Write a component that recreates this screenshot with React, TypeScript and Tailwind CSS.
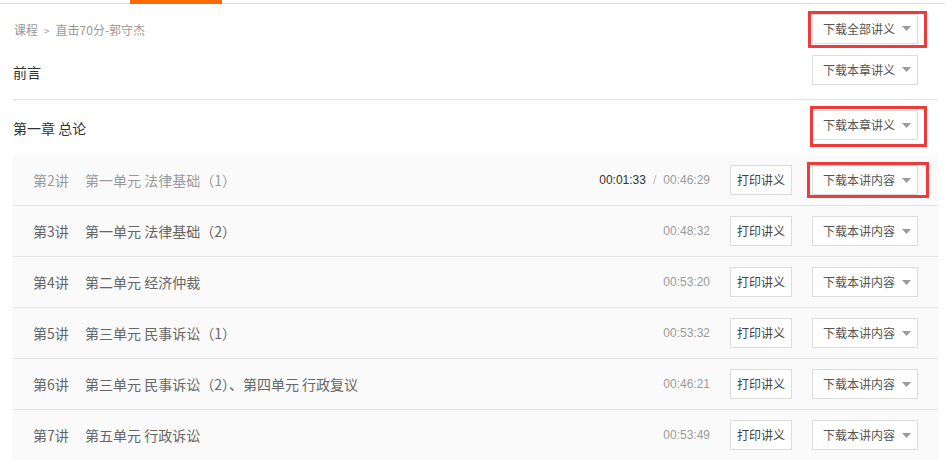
import React from 'react';

type Lecture = {
  no: number;
  title: string;
  duration: string;
  played?: string;
};

const lectures: Lecture[] = [
  { no: 2, title: '第一单元 法律基础（1）', duration: '00:46:29', played: '00:01:33' },
  { no: 3, title: '第一单元 法律基础（2）', duration: '00:48:32' },
  { no: 4, title: '第二单元 经济仲裁', duration: '00:53:20' },
  { no: 5, title: '第三单元 民事诉讼（1）', duration: '00:53:32' },
  { no: 6, title: '第三单元 民事诉讼（2）、第四单元 行政复议', duration: '00:46:21' },
  { no: 7, title: '第五单元 行政诉讼', duration: '00:53:49' },
];

const font = { fontFamily: '"Noto Sans CJK SC", "Liberation Sans", sans-serif' };

function Caret() {
  return (
    <svg width="9" height="5" viewBox="0 0 9 5" className="shrink-0">
      <path d="M0 0 L9 0 L4.5 5 Z" fill="#9a9a9a" />
    </svg>
  );
}

function DropButton({ label, mark }: { label: string; mark?: string }) {
  return (
    <div className="relative">
      <button className="w-[106px] h-[30px] border border-[#dcdcdc] bg-white flex items-center justify-between pl-[10px] pr-[6px] text-[12px] leading-none text-[#555]">
        <span>{label}</span>
        <Caret />
      </button>
      {mark && <span className={`absolute border-[3px] border-[#f03a3a] pointer-events-none ${mark}`} />}
    </div>
  );
}

export default function App() {
  return (
    <div className="w-[951px] h-[460px] overflow-hidden bg-white" style={font}>
      {/* top tab line */}
      <div className="relative h-[4px]">
        <div className="absolute left-0 right-[6px] top-[3px] h-px bg-[#dddddd]" />
        <div className="absolute left-[130px] top-0 w-[92px] h-[4px] bg-[#ff6a00]" />
      </div>

      <div className="px-[13px]">
        {/* breadcrumb */}
        <div className="mt-[10px] h-[29px] flex items-center justify-between">
          <div className="text-[12px] text-[#999] flex items-center gap-[6px] pl-px pt-[3px]">
            <span>课程</span>
            <span className="text-[10px]">&gt;</span>
            <span>直击70分-郭守杰</span>
          </div>
          <div className="mr-[20px]">
            <DropButton label="下载全部讲义" mark="-left-[4px] -right-[9px] -top-[3px] -bottom-[4px]" />
          </div>
        </div>

        {/* 前言 */}
        <div className="mt-[12px] h-[29px] flex items-center justify-between">
          <span className="text-[14px] text-[#333] pt-[6px]">前言</span>
          <div className="mr-[20px]">
            <DropButton label="下载本章讲义" />
          </div>
        </div>
        <div className="h-[16px] border-b border-[#e2e2e2]" />

        {/* chapter */}
        <div className="pt-[10px] pb-[15px] flex items-center justify-between">
          <span className="text-[14px] text-[#333] pt-[6px]">第一章 总论</span>
          <div className="mr-[20px]">
            <DropButton label="下载本章讲义" mark="-left-[2px] -right-[9px] -top-[4px] -bottom-[7px]" />
          </div>
        </div>

        {/* lectures */}
        <div>
          {lectures.map((l, i) => (
            <div
              key={l.no}
              className="h-[51px] border-b border-[#e3e3e3] bg-[#fafafa] flex items-center pl-[20px] pr-[20px]"
            >
              <span className={`w-[52px] text-[14px] ${l.played ? 'text-[#9a9a9a]' : 'text-[#666]'}`}>第{l.no}讲</span>
              <span className={`flex-1 text-[14px] ${l.played ? 'text-[#9a9a9a]' : 'text-[#666]'}`}>{l.title}</span>
              <span className="text-[12px] text-[#9a9a9a] flex items-center" style={{ fontFamily: '"Liberation Sans", sans-serif' }}>
                {l.played && (
                  <>
                    <span className="text-[#333]">{l.played}</span>
                    <span className="mx-[7px] text-[#bbb]">/</span>
                  </>
                )}
                <span>{l.duration}</span>
              </span>
              <button className="ml-[20px] w-[62px] h-[30px] border border-[#dcdcdc] bg-white text-[12px] leading-none text-[#444]">
                打印讲义
              </button>
              <div className="ml-[20px]">
                <DropButton
                  label="下载本讲内容"
                  mark={i === 0 ? '-left-[5px] -right-[11px] -top-[3px] -bottom-[3px]' : undefined}
                />
              </div>
            </div>
          ))}
        </div>
      </div>
    </div>
  );
}
